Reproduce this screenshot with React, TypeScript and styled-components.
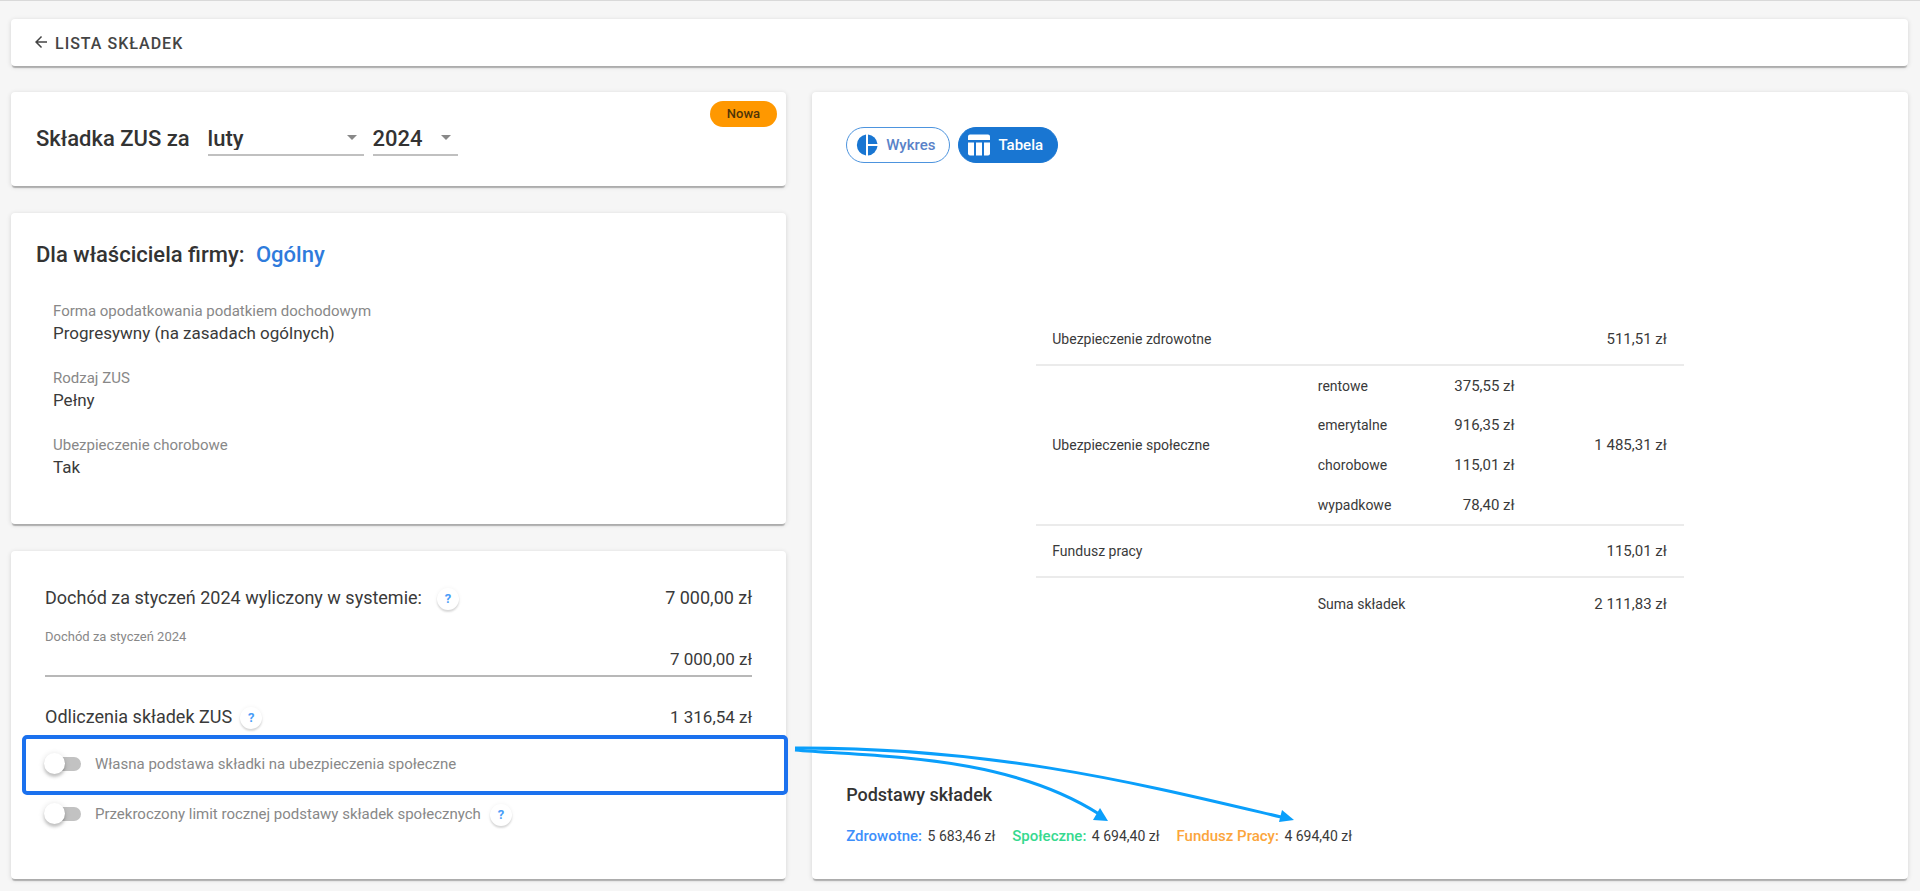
import React, { useState } from "react";
import styled, { createGlobalStyle } from "styled-components";
import { MdArrowBack, MdArrowDropDown } from "react-icons/md";

const GlobalStyle = createGlobalStyle`
  *, *::before, *::after { box-sizing: border-box; }
  html, body, #root { min-height: 100vh; }
  body {
    margin: 0;
    background: #f6f6f6;
    color: #3a3a3a;
    font-family: Roboto, "Liberation Sans", sans-serif;
    font-size: 15px;
    line-height: 20px;
  }
  button, input, select { font: inherit; color: inherit; }
`;

const Page = styled.div`
  display: flex;
  flex-direction: column;
  gap: 26px;
  min-height: 100vh;
  padding: 18px 12px 12px 11px;
  border-top: 1px solid #d9d9d9;
  overflow: hidden;
`;

const Card = styled.section`
  background: #fff;
  border-radius: 4px;
  box-shadow: 0 3px 1px -1px rgba(0, 0, 0, 0.24), 0 1px 5px rgba(0, 0, 0, 0.14);
`;

const TopBar = styled(Card).attrs({ as: "nav" })`
  display: flex;
  align-items: center;
  height: 47px;
  padding: 2px 21px 0;
`;

const BackLink = styled.a`
  display: flex;
  align-items: center;
  gap: 5px;
  color: #444;
  font-size: 16px;
  font-weight: 500;
  letter-spacing: 1px;
  text-decoration: none;
  text-transform: uppercase;
  svg { width: 18px; height: 18px; margin-bottom: 4px; }
`;

const Columns = styled.main`
  display: grid;
  flex: 1;
  grid-template-columns: 29fr 41fr;
  gap: 26px;
`;

const LeftColumn = styled.div`
  display: flex;
  flex-direction: column;
  gap: 27px;
`;

const PeriodCard = styled(Card)`
  position: relative;
  display: flex;
  align-items: flex-start;
  gap: 9px;
  min-height: 94px;
  padding: 33px 25px 30px;
`;

const Heading = styled.h2`
  margin: 0;
  color: #333;
  font-size: 22px;
  font-weight: 500;
  line-height: 28px;
`;

const PeriodHeading = styled(Heading)`
  margin-right: 9px;
`;

const SelectBox = styled.div<{ $width: number }>`
  display: flex;
  align-items: center;
  width: ${(p) => p.$width}px;
  border-bottom: 2px solid #c0c0c0;
  color: #333;
  font-size: 22px;
  line-height: 28px;
  select {
    flex: 1;
    min-width: 0;
    height: 29px;
    padding: 0 0 4px;
    border: 0;
    outline: 0;
    background: none;
    appearance: none;
    font-weight: 500;
  }
  svg { flex: none; width: 24px; height: 24px; margin-bottom: 5px; color: #888; pointer-events: none; }
`;

const Badge = styled.span`
  position: absolute;
  top: 9px;
  right: 9px;
  padding: 3px 17px;
  border-radius: 13px;
  background: #ff9800;
  color: #4f3508;
  font-size: 13px;
  font-weight: 500;
`;

const OwnerCard = styled(Card)`
  min-height: 311px;
  padding: 28px 25px;
  a { margin-left: 6px; color: #2f7bdc; text-decoration: none; }
`;

const Details = styled.dl`
  display: flex;
  flex-direction: column;
  gap: 22px;
  margin: 31px 0 0;
  padding-left: 17px;
  dt { color: #888; line-height: 22px; }
  dd { margin: 0; color: #3a3a3a; font-size: 17px; line-height: 23px; }
`;

const IncomeCard = styled(Card)`
  flex: 1;
  padding: 33px 0 41px;
`;

const Line = styled.div`
  display: flex;
  align-items: center;
  justify-content: space-between;
  height: 28px;
  padding: 0 34px;
  font-size: 18px;
`;

const WithHelp = styled.span<{ $gap: number }>`
  display: flex;
  align-items: center;
  gap: ${(p) => p.$gap}px;
`;

const Amount = styled.span<{ $size: number }>`
  font-size: ${(p) => p.$size}px;
  white-space: nowrap;
`;

const HelpButton = styled.button`
  display: grid;
  place-items: center;
  width: 22px;
  height: 22px;
  margin-top: 2px;
  padding: 0;
  border: 0;
  border-radius: 50%;
  background: #fff;
  box-shadow: 0 2px 2px rgba(0, 0, 0, 0.14), 0 0 4px rgba(0, 0, 0, 0.05);
  color: #4a9df8;
  font-size: 13px;
  font-weight: 700;
  line-height: 20px;
`;

const Field = styled.div`
  display: flex;
  flex-direction: column;
  margin: 16px 34px 26px;
  border-bottom: 2px solid #b8b8b8;
  label { color: #888; font-size: 13px; line-height: 18px; }
  input {
    width: 100%;
    height: 29px;
    padding: 0 0 3px;
    border: 0;
    outline: 0;
    background: none;
    font-size: 17px;
    text-align: right;
  }
`;

const SwitchRow = styled.div`
  display: flex;
  align-items: center;
  gap: 9px;
  height: 38px;
  padding: 0 34px;
  color: #888;
  label { display: flex; align-items: center; gap: 14px; }
`;

const HighlightRow = styled.div`
  position: relative;
  margin: 4px -2px 0 11px;
  padding: 6px 0 8px;
  border: 4px solid #1b71ee;
  border-radius: 5px;
  ${SwitchRow} { padding: 0 19px; }
`;

const Switch = styled.input.attrs({ type: "checkbox", role: "switch" })`
  position: relative;
  width: 32px;
  height: 14px;
  margin: 0 0 0 4px;
  border-radius: 7px;
  background: #c2c2c2;
  appearance: none;
  cursor: pointer;
  &::before {
    content: "";
    position: absolute;
    top: -4px;
    left: -5px;
    width: 21px;
    height: 21px;
    border-radius: 50%;
    background: #fff;
    box-shadow: 0 3px 3px rgba(0, 0, 0, 0.18), 0 1px 6px rgba(0, 0, 0, 0.14);
  }
  &:checked { background: #90c1f5; }
  &:checked::before { left: 16px; background: #1976d2; }
`;

const Arrows = styled.svg`
  position: absolute;
  z-index: 2;
  top: 8px;
  left: calc(100% + 11px);
  width: 506px;
  height: 84px;
  overflow: visible;
  pointer-events: none;
`;

const SummaryCard = styled(Card)`
  display: flex;
  flex-direction: column;
  padding: 35px 34px 33px;
`;

const Tabs = styled.div`
  display: flex;
  gap: 8px;
`;

const Tab = styled.button<{ $active: boolean }>`
  display: flex;
  align-items: center;
  gap: 8px;
  height: 36px;
  padding: 0 14px 0 9px;
  border: 1px solid ${(p) => (p.$active ? "#1976d2" : "#4d94de")};
  border-radius: 18px;
  background: ${(p) => (p.$active ? "#1976d2" : "#fff")};
  color: ${(p) => (p.$active ? "#fff" : "#5a82c8")};
  font-size: 15px;
  font-weight: 500;
  cursor: pointer;
  svg { width: 22px; height: 22px; fill: ${(p) => (p.$active ? "#fff" : "#1976d2")}; }
`;

const TableArea = styled.div`
  display: flex;
  flex: 1;
  align-items: center;
  justify-content: center;
  padding-bottom: 6px;
`;

const Table = styled.table`
  width: 63%;
  border-collapse: collapse;
  table-layout: fixed;
  tbody + tbody { border-top: 2px solid #ebebeb; }
  th { padding: 0 0 0 16px; font-size: 14px; font-weight: 400; text-align: left; }
  td { padding: 0 17px 0 0; font-size: 15px; text-align: right; }
`;

const Column = styled.col<{ $share: number }>`
  width: ${(p) => p.$share}%;
`;

const Row = styled.tr<{ $height: number }>`
  height: ${(p) => p.$height}px;
`;

const BasesHeading = styled.h3`
  margin: 0 0 21px;
  color: #333;
  font-size: 18px;
  font-weight: 500;
  line-height: 20px;
`;

const Bases = styled.ul`
  display: flex;
  flex-wrap: wrap;
  gap: 17px;
  margin: 0;
  padding: 0;
  list-style: none;
`;

const Base = styled.li<{ $color: string }>`
  font-size: 14px;
  strong { margin-right: 2px; color: ${(p) => p.$color}; font-size: 15px; font-weight: 500; }
`;

const social = [
  ["rentowe", "375,55 zł"],
  ["emerytalne", "916,35 zł"],
  ["chorobowe", "115,01 zł"],
  ["wypadkowe", "78,40 zł"],
];

const details = [
  ["Forma opodatkowania podatkiem dochodowym", "Progresywny (na zasadach ogólnych)"],
  ["Rodzaj ZUS", "Pełny"],
  ["Ubezpieczenie chorobowe", "Tak"],
];

const bases = [
  ["Zdrowotne:", "5 683,46 zł", "#3d8ffb"],
  ["Społeczne:", "4 694,40 zł", "#36d98f"],
  ["Fundusz Pracy:", "4 694,40 zł", "#fba53c"],
];

function Help() {
  return <HelpButton type="button" aria-label="Pomoc">?</HelpButton>;
}

function PieIcon() {
  return (
    <svg viewBox="0 0 22 22" aria-hidden="true">
      <path d="M10 0.5 V21.5 A10.6 10.6 0 0 1 10 0.5 Z" />
      <path d="M12 0.5 A10.6 10.6 0 0 1 21.5 10 H12 Z" />
      <path d="M12 12 H21.5 A10.6 10.6 0 0 1 12 21.5 Z" />
    </svg>
  );
}

function TableIcon() {
  return (
    <svg viewBox="0 0 22 22" aria-hidden="true">
      <path d="M2 0.5 H20 A2 2 0 0 1 22 2.5 V6 H0 V2.5 A2 2 0 0 1 2 0.5 Z" />
      <path d="M0 8.5 H6 V21.5 H2 A2 2 0 0 1 0 19.5 Z" />
      <path d="M8 8.5 H14 V21.5 H8 Z" />
      <path d="M16 8.5 H22 V19.5 A2 2 0 0 1 20 21.5 H16 Z" />
    </svg>
  );
}

export default function App() {
  const [view, setView] = useState("table");
  const [income, setIncome] = useState("7 000,00 zł");

  return (
    <>
      <GlobalStyle />
      <Page>
        <TopBar>
          <BackLink href="#lista"><MdArrowBack />Lista składek</BackLink>
        </TopBar>
        <Columns>
          <LeftColumn>
            <PeriodCard>
              <PeriodHeading>Składka ZUS za</PeriodHeading>
              <SelectBox $width={156}>
                <select aria-label="Miesiąc" defaultValue="luty">
                  <option>styczeń</option>
                  <option>luty</option>
                  <option>marzec</option>
                </select>
                <MdArrowDropDown />
              </SelectBox>
              <SelectBox $width={85}>
                <select aria-label="Rok" defaultValue="2024">
                  <option>2023</option>
                  <option>2024</option>
                </select>
                <MdArrowDropDown />
              </SelectBox>
              <Badge>Nowa</Badge>
            </PeriodCard>

            <OwnerCard>
              <Heading>Dla właściciela firmy: <a href="#ogolny">Ogólny</a></Heading>
              <Details>
                {details.map(([name, value]) => (
                  <div key={name}>
                    <dt>{name}</dt>
                    <dd>{value}</dd>
                  </div>
                ))}
              </Details>
            </OwnerCard>

            <IncomeCard>
              <Line>
                <WithHelp $gap={15}>Dochód za styczeń 2024 wyliczony w systemie: <Help /></WithHelp>
                <Amount $size={18}>7 000,00 zł</Amount>
              </Line>
              <Field>
                <label htmlFor="income">Dochód za styczeń 2024</label>
                <input id="income" value={income} onChange={(e) => setIncome(e.target.value)} />
              </Field>
              <Line>
                <WithHelp $gap={8}>Odliczenia składek ZUS <Help /></WithHelp>
                <Amount $size={17}>1 316,54 zł</Amount>
              </Line>
              <HighlightRow>
                <SwitchRow>
                  <label><Switch />Własna podstawa składki na ubezpieczenia społeczne</label>
                </SwitchRow>
                <Arrows viewBox="0 0 506 84" aria-hidden="true">
                  <g fill="none" stroke="#0a9ffb" strokeWidth="3">
                    <path d="M0 3 C80 10 210 7 304 67" />
                    <path d="M0 1 C200 0 350 38 486 70" />
                  </g>
                  <g fill="#0a9ffb">
                    <path d="M313 74 L305 61 L298 73 Z" />
                    <path d="M499 73 L487 63 L484 75 Z" />
                  </g>
                </Arrows>
              </HighlightRow>
              <SwitchRow>
                <label><Switch />Przekroczony limit rocznej podstawy składek społecznych</label>
                <Help />
              </SwitchRow>
            </IncomeCard>
          </LeftColumn>

          <SummaryCard>
            <Tabs>
              <Tab type="button" $active={view === "chart"} onClick={() => setView("chart")}>
                <PieIcon />Wykres
              </Tab>
              <Tab type="button" $active={view === "table"} onClick={() => setView("table")}>
                <TableIcon />Tabela
              </Tab>
            </Tabs>
            <TableArea>
              <Table>
                <colgroup>
                  <Column $share={41} />
                  <Column $share={17} />
                  <Column $share={18.5} />
                  <Column $share={23.5} />
                </colgroup>
                <tbody>
                  <Row $height={52}>
                    <th scope="row" colSpan={3}>Ubezpieczenie zdrowotne</th>
                    <td>511,51 zł</td>
                  </Row>
                </tbody>
                <tbody>
                  {social.map(([name, value], i) => (
                    <Row $height={40} key={name}>
                      {i === 0 && <th scope="rowgroup" rowSpan={4}>Ubezpieczenie społeczne</th>}
                      <th scope="row">{name}</th>
                      <td>{value}</td>
                      {i === 0 && <td rowSpan={4}>1 485,31 zł</td>}
                    </Row>
                  ))}
                </tbody>
                <tbody>
                  <Row $height={52}>
                    <th scope="row" colSpan={3}>Fundusz pracy</th>
                    <td>115,01 zł</td>
                  </Row>
                </tbody>
                <tbody>
                  <Row $height={52}>
                    <td />
                    <th scope="row" colSpan={2}>Suma składek</th>
                    <td>2 111,83 zł</td>
                  </Row>
                </tbody>
              </Table>
            </TableArea>
            <BasesHeading>Podstawy składek</BasesHeading>
            <Bases>
              {bases.map(([name, value, color]) => (
                <Base $color={color} key={name}><strong>{name}</strong> {value}</Base>
              ))}
            </Bases>
          </SummaryCard>
        </Columns>
      </Page>
    </>
  );
}
